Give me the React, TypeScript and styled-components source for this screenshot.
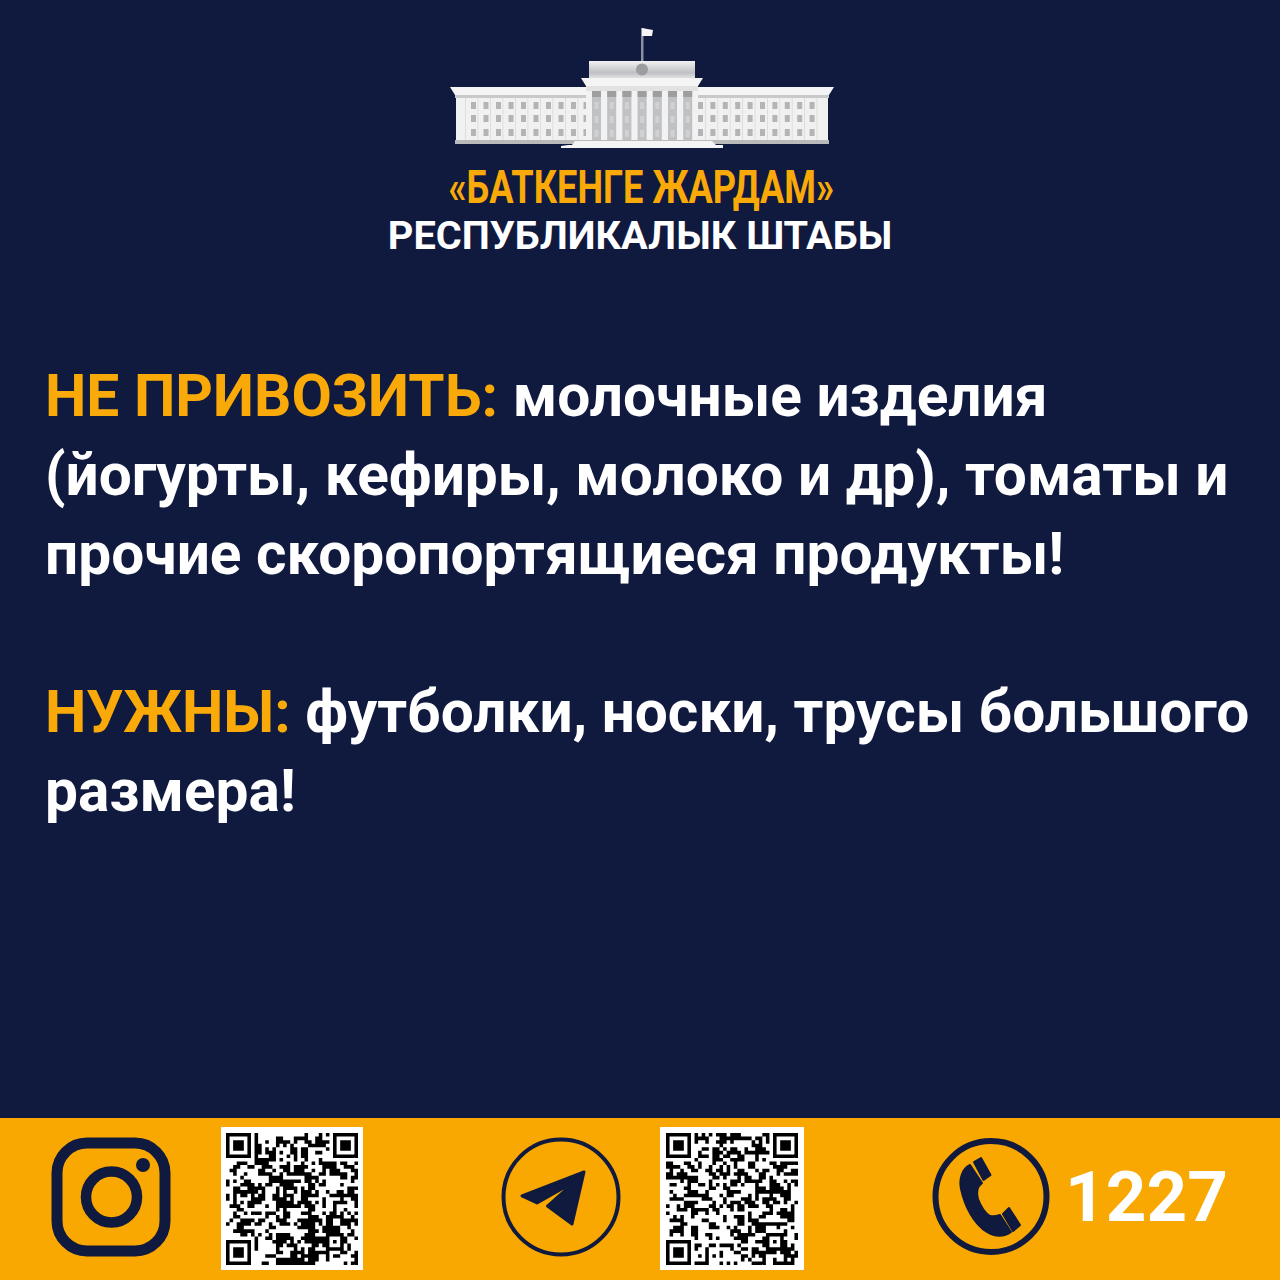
import styled, { createGlobalStyle } from "styled-components";

const GlobalStyle = createGlobalStyle`
  html, body {
    margin: 0;
    padding: 0;
    background: #10193e;
  }
`;

const Page = styled.div`
  width: 1280px;
  height: 1280px;
  display: flex;
  flex-direction: column;
  background: #10193e;
  font-family: Roboto, "Liberation Sans", sans-serif;
  font-weight: 700;
  overflow: hidden;
`;

const Header = styled.header`
  display: flex;
  flex-direction: column;
  align-items: center;
  padding-top: 20px;
`;

const Logo = styled.svg`
  display: block;
`;

const Title = styled.div`
  margin: 11px 0 0 3px;
  height: 53px;
  font-size: 46px;
  line-height: 52px;
  color: #f9a908;
  white-space: nowrap;
  transform: scaleX(0.786);
`;

const Subtitle = styled.div`
  height: 44px;
  font-size: 39.7px;
  line-height: 44px;
  color: #fff;
  white-space: nowrap;
`;

const Body = styled.main`
  flex: 1;
  padding: 99px 0 0 45px;
  font-size: 58.6px;
  line-height: 79px;
  color: #fff;
`;

const Paragraph = styled.p`
  margin: 0 0 79px;
  white-space: nowrap;
`;

const Accent = styled.span`
  color: #f9a908;
`;

const Footer = styled.footer`
  height: 162px;
  display: flex;
  align-items: center;
  padding-left: 51px;
  background: #f8a800;
`;

const Group = styled.div<{ $gap: number; $left?: number }>`
  display: flex;
  align-items: center;
  gap: ${(p) => p.$gap}px;
  margin-left: ${(p) => p.$left || 0}px;
`;

const Icon = styled.svg`
  display: block;
  flex: none;
  margin-top: -5px;
`;

const QrBox = styled.div<{ $width: number }>`
  width: ${(p) => p.$width}px;
  height: 143px;
  margin-top: -1px;
  display: flex;
  align-items: center;
  justify-content: center;
  background: #fff;
  flex: none;
`;

const QrImage = styled.svg`
  display: block;
`;

const Phone = styled.div`
  margin-top: -5px;
  font-size: 71px;
  line-height: 80px;
  color: #fff;
`;

const NAVY = "#10193e";

const Building = () => {
  const wingWindows = [0, 1, 2, 3, 4, 5, 6, 7, 8, 9];
  const rows = [82, 95, 109];
  const columns = [0, 1, 2, 3, 4, 5, 6];
  const pilasters = [0, 1, 2, 3, 4, 5, 6, 7, 8, 9];
  return (
    <Logo width="400" height="130" viewBox="0 0 400 130">
      <defs>
        <linearGradient id="attic" x1="0" y1="0" x2="0" y2="1">
          <stop offset="0" stopColor="#f2f2f2" />
          <stop offset="0.65" stopColor="#bfc0c3" />
          <stop offset="1" stopColor="#e6e6e6" />
        </linearGradient>
      </defs>
      <rect x="201" y="8" width="2.500" height="33" fill="#8a8fa3" />
      <path d="M202 8l11 2-1 6-10 0z" fill="#f4f4f4" />
      <rect x="149" y="41" width="106" height="18" fill="url(#attic)" />
      <circle cx="202" cy="49.500" r="6" fill="#9c9da0" />
      <path d="M141 58H263L258 66H146z" fill="#f4f4f4" />
      <rect x="146" y="66" width="112" height="5" fill="#e2e2e2" />
      {/* wings */}
      <path d="M10 67H146V75H15z" fill="#f4f4f4" />
      <path d="M258 67H394L389 75H258z" fill="#f4f4f4" />
      <rect x="15" y="75" width="131" height="3" fill="#c8c9cb" />
      <rect x="258" y="75" width="131" height="3" fill="#c8c9cb" />
      <rect x="16" y="78" width="130" height="42" fill="#f1f1f1" />
      <rect x="258" y="78" width="130" height="42" fill="#f1f1f1" />
      {pilasters.map((i) => (
        <g key={i} fill="#d9d9da">
          <rect x={25 + i * 12.5} y="78" width="0.8" height="42" />
          <rect x={265 + i * 12.4} y="78" width="0.8" height="42" />
        </g>
      ))}
      {wingWindows.map((i) =>
        rows.map((y) => (
          <g key={`${i}-${y}`} fill="#b3b4b6">
            <rect x={31 + i * 12.5} y={y} width="5" height="7" />
            <rect x={258 + i * 12.4} y={y} width="5" height="7" />
          </g>
        ))
      )}
      {/* centre colonnade */}
      <rect x="146" y="71" width="112" height="50" fill="#f2f2f2" />
      {columns.map((i) => (
        <g key={i}>
          <rect x={152 + i * 15.2} y="71" width="9" height="49" fill="#c0c1c3" />
          <rect x={152 + i * 15.2} y="71" width="9" height="6" fill="#9d9ea0" />
          <rect x={154.500 + i * 15.2} y="82" width="4" height="7" fill="#d0d1d2" />
          <rect x={154.500 + i * 15.2} y="96" width="4" height="7" fill="#d0d1d2" />
          <rect x={154.500 + i * 15.2} y="110" width="4" height="7" fill="#d0d1d2" />
        </g>
      ))}
      <rect x="15" y="120" width="374" height="4" fill="#b9babb" />
      <path d="M128 125H132L135 121H272L276 125H283V128H121V126z" fill="#f4f4f4" />
    </Logo>
  );
};

const InstagramIcon = () => (
  <Icon width="120" height="120" viewBox="0 0 120 120" fill="none" stroke={NAVY}>
    <rect x="6" y="6" width="108" height="108" rx="30" strokeWidth="11" />
    <circle cx="60.500" cy="60" r="25.500" strokeWidth="10.500" />
    <circle cx="92" cy="28" r="7" fill={NAVY} stroke="none" />
  </Icon>
);

const TelegramIcon = () => (
  <Icon width="120" height="120" viewBox="0 0 120 120" fill="none">
    <circle cx="60" cy="60" r="57.500" stroke={NAVY} strokeWidth="4" />
    <path
      d="M83 35L21 59L36 66L74 44.500L46.500 69L71 87z"
      fill={NAVY}
      stroke={NAVY}
      strokeWidth="3"
      strokeLinejoin="round"
    />
  </Icon>
);

const PhoneIcon = () => (
  <Icon width="120" height="120" viewBox="0 0 120 120" fill="none">
    <circle cx="59" cy="59.500" r="55.500" stroke={NAVY} strokeWidth="6" />
    <g fill={NAVY} stroke={NAVY} strokeWidth="2" strokeLinejoin="round">
      <path d="M42 25L49 21L58.500 38L51.500 43z" />
      <path d="M71 77L77 71L88 88L81 94z" />
      <path d="M38 28L50 46C46 49 44 55 46 62C49 70 53 76 58 79C62 80 65 79 68 78L79 95C72 100 63 100 55 95C42 87 33 70 29 52C27 42 30 32 38 28z" />
    </g>
  </Icon>
);

const QR_SIZE = 37;

// finder squares and the alignment block stay fixed, the rest is filled from the seed
const buildModules = (seed: number) => {
  let state = seed;
  const next = () => {
    state = (state * 1664525 + 1013904223) >>> 0;
    return (state >>> 16) / 65536;
  };
  const cells: boolean[][] = [];
  for (let y = 0; y < QR_SIZE; y++) {
    cells.push([]);
    for (let x = 0; x < QR_SIZE; x++) {
      const left = x > 0 ? cells[y][x - 1] : false;
      const up = y > 0 ? cells[y - 1][x] : false;
      const chance = 0.32 + (left ? 0.16 : 0) + (up ? 0.16 : 0);
      cells[y].push(next() < chance);
    }
  }
  const finder = (ox: number, oy: number) => {
    for (let y = -1; y < 8; y++) {
      for (let x = -1; x < 8; x++) {
        const cx = ox + x;
        const cy = oy + y;
        if (cx < 0 || cy < 0 || cx >= QR_SIZE || cy >= QR_SIZE) continue;
        const inside = x >= 0 && x <= 6 && y >= 0 && y <= 6;
        const ring = x === 0 || x === 6 || y === 0 || y === 6;
        const core = x >= 2 && x <= 4 && y >= 2 && y <= 4;
        cells[cy][cx] = inside && (ring || core);
      }
    }
  };
  finder(0, 0);
  finder(QR_SIZE - 7, 0);
  finder(0, QR_SIZE - 7);
  for (let y = 0; y < 5; y++) {
    for (let x = 0; x < 5; x++) {
      const on = x === 0 || x === 4 || y === 0 || y === 4 || (x === 2 && y === 2);
      cells[QR_SIZE - 9 + y][QR_SIZE - 9 + x] = on;
    }
  }
  return cells;
};

const QrCode = ({ seed, width }: { seed: number; width: number }) => {
  const cells = buildModules(seed);
  let d = "";
  cells.forEach((row, y) =>
    row.forEach((on, x) => {
      if (on) d += `M${x} ${y}h1v1h-1z`;
    })
  );
  return (
    <QrBox $width={width}>
      <QrImage width="132" height="132" viewBox={`0 0 ${QR_SIZE} ${QR_SIZE}`}>
        <path d={d} fill="#000" />
      </QrImage>
    </QrBox>
  );
};

const App = () => {
  return (
    <Page>
      <GlobalStyle />
      <Header>
        <Building />
        <Title>«БАТКЕНГЕ ЖАРДАМ»</Title>
        <Subtitle>РЕСПУБЛИКАЛЫК ШТАБЫ</Subtitle>
      </Header>
      <Body>
        <Paragraph>
          <Accent>НЕ ПРИВОЗИТЬ:</Accent> молочные изделия
          <br />
          (йогурты, кефиры, молоко и др), томаты и
          <br />
          прочие скоропортящиеся продукты!
        </Paragraph>
        <Paragraph>
          <Accent>НУЖНЫ:</Accent> футболки, носки, трусы большого
          <br />
          размера!
        </Paragraph>
      </Body>
      <Footer>
        <Group $gap={50}>
          <InstagramIcon />
          <QrCode seed={7} width={142} />
        </Group>
        <Group $gap={39} $left={138}>
          <TelegramIcon />
          <QrCode seed={23} width={144} />
        </Group>
        <Group $gap={13} $left={128}>
          <PhoneIcon />
          <Phone>1227</Phone>
        </Group>
      </Footer>
    </Page>
  );
};

export default App;
